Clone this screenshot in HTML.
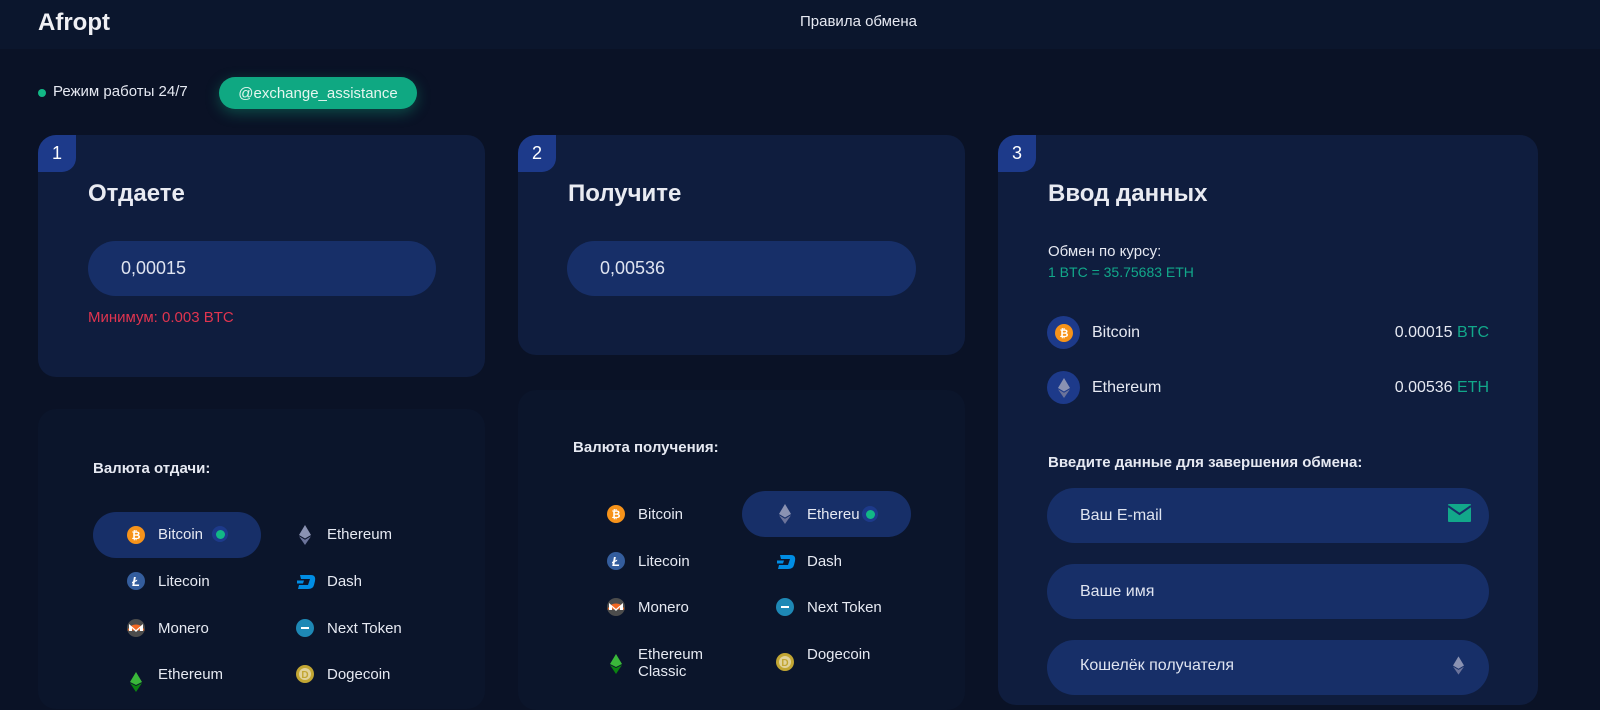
<!DOCTYPE html><html><head><meta charset="utf-8"><style>
*{margin:0;padding:0;box-sizing:border-box}
body{width:1600px;height:691px;overflow:hidden;background:#0a1226;font-family:"Liberation Sans","Noto Sans CJK SC",sans-serif;color:#e6e9f2;position:relative}
.a{position:absolute}
.hdr{left:0;top:0;width:1600px;height:49px;background:#0b162d}
.card{background:#0f1d3e;border-radius:18px}
.card2{background:#0b152b;border-radius:18px}
.num{width:38px;height:37px;background:#1d3a8a;border-radius:0 0 14px 0;font-size:18px;color:#fff;display:flex;align-items:center;justify-content:center;border-top-left-radius:18px}
.h{font-size:24px;font-weight:bold;color:#e9ebf2}
.inp{background:#172f68;border-radius:28px;font-size:18px;color:#dfe4f0;display:flex;align-items:center;padding-left:33px}
.lbl{font-size:15px;font-weight:bold;color:#e6e9f2}
.it{font-size:15px;color:#e6e9f2;display:flex;align-items:center}
.it svg{margin-right:0}
.pill{background:#172f68;border-radius:24px}
.dot{width:16px;height:16px;border-radius:50%;background:#1d3a8a;display:flex;align-items:center;justify-content:center}
.dot i{width:9px;height:9px;border-radius:50%;background:#12b886;display:block}
</style></head><body>
<div class="a hdr"></div>
<div class="a" style="left:38px;top:9px;font-size:24px;font-weight:bold;color:#f0f0f4">Afropt</div>
<div class="a" style="left:800px;top:13px;font-size:15px;color:#e6e9f2">Правила обмена</div>
<div class="a" style="left:38px;top:89px;width:8px;height:8px;border-radius:50%;background:#12b886"></div>
<div class="a" style="left:53px;top:83px;font-size:15px">Режим работы 24/7</div>
<div class="a" style="left:219px;top:77px;width:198px;height:32px;border-radius:16px;background:#0fa882;box-shadow:0 4px 14px rgba(18,184,134,.35);font-size:15px;color:#e4f6ef;display:flex;align-items:center;justify-content:center">@exchange_assistance</div>

<!-- card1 -->
<div class="a card" style="left:38px;top:135px;width:447px;height:242px"></div>
<div class="a num" style="left:38px;top:135px">1</div>
<div class="a h" style="left:88px;top:180px">Отдаете</div>
<div class="a inp" style="left:88px;top:241px;width:348px;height:55px">0,00015</div>
<div class="a" style="left:88px;top:309px;font-size:15px;color:#e0344f">Минимум: 0.003 BTC</div>

<!-- card2 -->
<div class="a card" style="left:518px;top:135px;width:447px;height:220px"></div>
<div class="a num" style="left:518px;top:135px">2</div>
<div class="a h" style="left:568px;top:180px">Получите</div>
<div class="a inp" style="left:567px;top:241px;width:349px;height:55px">0,00536</div>

<!-- card3 -->
<div class="a card" style="left:998px;top:135px;width:540px;height:570px"></div>
<div class="a num" style="left:998px;top:135px">3</div>
<div class="a h" style="left:1048px;top:180px">Ввод данных</div>
<div class="a" style="left:1048px;top:243px;font-size:15px">Обмен по курсу:</div>
<div class="a" style="left:1048px;top:264px;font-size:14px;color:#12a88a">1 BTC = 35.75683 ETH</div>
<div class="a" style="left:1047px;top:316px;width:33px;height:33px;border-radius:50%;background:#1d3a8a;display:flex;align-items:center;justify-content:center"><svg width="18" height="18" viewBox="0 0 18 18"><circle cx="9" cy="9" r="9" fill="#f7931a"/><text x="9" y="13" font-size="11" font-weight="bold" text-anchor="middle" fill="#fff" font-family="Liberation Sans">₿</text></svg></div>
<div class="a" style="left:1092px;top:324px;font-size:16px">Bitcoin</div>
<div class="a" style="left:1300px;top:324px;width:189px;text-align:right;font-size:16px">0.00015 <span style="color:#12a88a">BTC</span></div>
<div class="a" style="left:1047px;top:371px;width:33px;height:33px;border-radius:50%;background:#1d3a8a;display:flex;align-items:center;justify-content:center"><svg width="12" height="20" viewBox="0 0 12 20"><path d="M6 0L12 10L6 13.5L0 10Z" fill="#8a92b2"/><path d="M6 14.8L12 11.2L6 20L0 11.2Z" fill="#6b739a"/></svg></div>
<div class="a" style="left:1092px;top:379px;font-size:16px">Ethereum</div>
<div class="a" style="left:1300px;top:379px;width:189px;text-align:right;font-size:16px">0.00536 <span style="color:#12a88a">ETH</span></div>
<div class="a lbl" style="left:1048px;top:454px">Введите данные для завершения обмена:</div>
<div class="a inp" style="left:1047px;top:488px;width:442px;height:55px;font-size:16px">Ваш E-mail</div>
<svg class="a" style="left:1477px;top:504px" width="0" height="0"></svg>
<svg class="a" style="left:1448px;top:504px" width="23" height="18" viewBox="0 0 23 18"><rect width="23" height="18" rx="1" fill="#12a88a"/><path d="M0 2L11.5 10L23 2" stroke="#172f68" stroke-width="2" fill="none"/></svg>
<div class="a inp" style="left:1047px;top:564px;width:442px;height:55px;font-size:16px">Ваше имя</div>
<div class="a inp" style="left:1047px;top:640px;width:442px;height:55px;font-size:16px;align-items:flex-start;padding-top:17px">Кошелёк получателя</div>
<svg class="a" style="left:1453px;top:656px" width="11" height="19" viewBox="0 0 12 20"><path d="M6 0L12 10L6 13.5L0 10Z" fill="#8a92b2"/><path d="M6 14.8L12 11.2L6 20L0 11.2Z" fill="#6b739a"/></svg>

<!-- bottom cards -->
<div class="a card2" style="left:38px;top:409px;width:447px;height:300px"></div>
<div class="a lbl" style="left:93px;top:460px">Валюта отдачи:</div>
<div class="a pill" style="left:93px;top:512px;width:168px;height:46px"></div>
<div class="a card2" style="left:518px;top:390px;width:447px;height:320px"></div>
<div class="a lbl" style="left:573px;top:439px">Валюта получения:</div>
<div class="a pill" style="left:742px;top:491px;width:169px;height:46px"></div>

<svg width="0" height="0" style="position:absolute"><defs>
<g id="btc"><circle cx="9" cy="9" r="9" fill="#f7931a"/><text x="9" y="13" font-size="11" font-weight="bold" text-anchor="middle" fill="#fff" font-family="Liberation Sans">₿</text></g>
<g id="ltc"><circle cx="9" cy="9" r="9" fill="#345d9d"/><text x="9" y="14" font-size="13" font-weight="bold" text-anchor="middle" fill="#fff" font-family="Liberation Sans" font-style="italic">Ł</text></g>
<g id="xmr"><circle cx="9" cy="9" r="9" fill="#4c4c4c"/><path d="M0.5 11.5A9 9 0 0 1 17.5 11.5Z" fill="#f26822"/><path d="M2 12V5L9 11L16 5V12H13V9L9 13L5 9V12Z" fill="#fff"/></g>
<g id="eth"><path d="M9 0L15 10L9 13.5L3 10Z" fill="#8a92b2"/><path d="M9 14.8L15 11.2L9 20L3 11.2Z" fill="#6b739a"/></g>
<g id="dash"><path d="M3 3H14Q19 3 18 9L17 13Q16 17 11 17H1L2 13H11L13 7H4Z" fill="#008de4"/><path d="M0 8.5H7L6 11.5H-1Z" fill="#008de4"/></g>
<g id="nxt"><circle cx="9" cy="9" r="9" fill="#1e88b5"/><rect x="5" y="8" width="8" height="2" fill="#fff"/></g>
<g id="doge"><circle cx="9" cy="9" r="9" fill="#c2a633"/><circle cx="9" cy="9" r="6" fill="#e1d29a"/><text x="9" y="13" font-size="10" font-weight="bold" text-anchor="middle" fill="#c2a633" font-family="Liberation Sans">D</text></g>
<g id="etc"><path d="M9 0L15 10L9 13L3 10Z" fill="#3ab83a"/><path d="M9 14L15 11L9 20L3 11Z" fill="#0b8311"/></g>
</defs></svg>

<!-- left list -->
<svg class="a" style="left:127px;top:526px" width="18" height="20"><use href="#btc"/></svg><div class="a it" style="left:158px;top:526px">Bitcoin</div>
<div class="a dot" style="left:212px;top:526px"><i></i></div>
<svg class="a" style="left:296px;top:525px" width="18" height="20"><use href="#eth"/></svg><div class="a it" style="left:327px;top:526px">Ethereum</div>
<svg class="a" style="left:127px;top:572px" width="18" height="20"><use href="#ltc"/></svg><div class="a it" style="left:158px;top:573px">Litecoin</div>
<svg class="a" style="left:297px;top:572px" width="20" height="20"><use href="#dash"/></svg><div class="a it" style="left:327px;top:573px">Dash</div>
<svg class="a" style="left:127px;top:619px" width="18" height="20"><use href="#xmr"/></svg><div class="a it" style="left:158px;top:620px">Monero</div>
<svg class="a" style="left:296px;top:619px" width="18" height="20"><use href="#nxt"/></svg><div class="a it" style="left:327px;top:620px">Next Token</div>
<svg class="a" style="left:127px;top:672px" width="18" height="20"><use href="#etc"/></svg><div class="a it" style="left:158px;top:666px">Ethereum</div>
<svg class="a" style="left:296px;top:665px" width="18" height="20"><use href="#doge"/></svg><div class="a it" style="left:327px;top:666px">Dogecoin</div>

<!-- middle list -->
<svg class="a" style="left:607px;top:505px" width="18" height="20"><use href="#btc"/></svg><div class="a it" style="left:638px;top:506px">Bitcoin</div>
<svg class="a" style="left:776px;top:504px" width="18" height="20"><use href="#eth"/></svg><div class="a it" style="left:807px;top:506px">Ethereu</div>
<div class="a dot" style="left:862px;top:506px"><i></i></div>
<svg class="a" style="left:607px;top:552px" width="18" height="20"><use href="#ltc"/></svg><div class="a it" style="left:638px;top:553px">Litecoin</div>
<svg class="a" style="left:777px;top:552px" width="20" height="20"><use href="#dash"/></svg><div class="a it" style="left:807px;top:553px">Dash</div>
<svg class="a" style="left:607px;top:598px" width="18" height="20"><use href="#xmr"/></svg><div class="a it" style="left:638px;top:599px">Monero</div>
<svg class="a" style="left:776px;top:598px" width="18" height="20"><use href="#nxt"/></svg><div class="a it" style="left:807px;top:599px">Next Token</div>
<svg class="a" style="left:607px;top:654px" width="18" height="20"><use href="#etc"/></svg><div class="a" style="left:638px;top:646px;font-size:15px;line-height:17px">Ethereum<br>Classic</div>
<svg class="a" style="left:776px;top:653px" width="18" height="20"><use href="#doge"/></svg><div class="a it" style="left:807px;top:646px">Dogecoin</div>
</body></html>
